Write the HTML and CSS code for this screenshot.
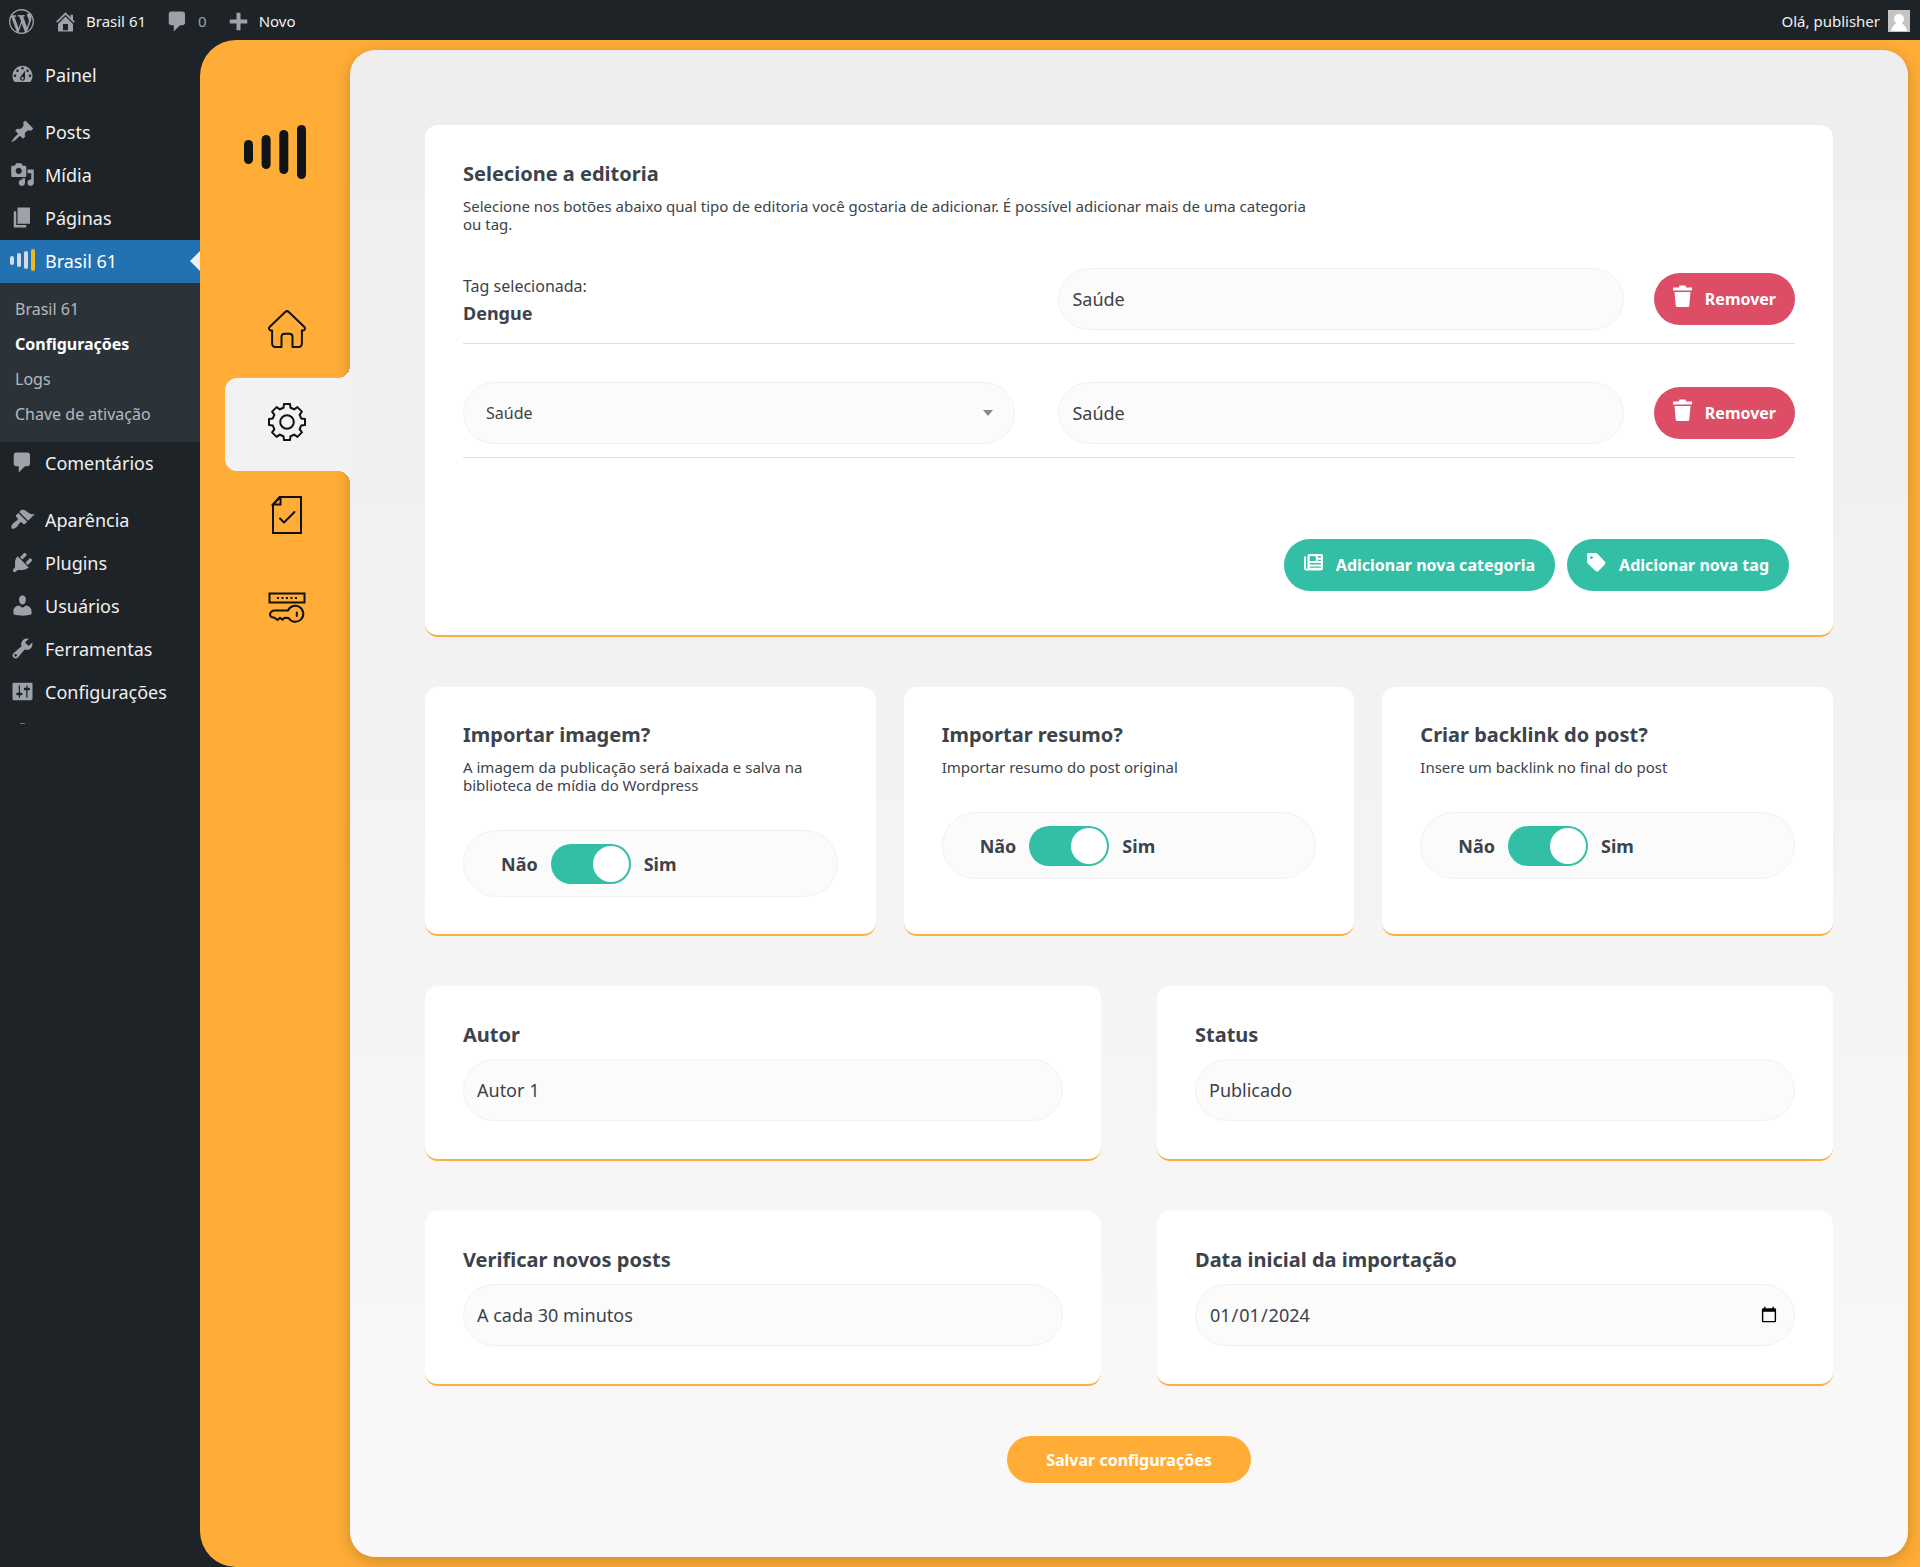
FILE: index.html
```html
<!DOCTYPE html>
<html lang="pt-BR">
<head>
<meta charset="utf-8">
<meta name="viewport" content="width=device-width, initial-scale=1">
<title>Configurações ‹ Brasil 61</title>
<link rel="stylesheet" href="styles.css">
</head>
<body>
<header class="adminbar">
  <a class="bar-item bar-logo" href="#" aria-label="WordPress"><svg class="dashicon" viewBox="0 0 20 20"><path d="M20 10c0-5.51-4.49-10-10-10C4.48 0 0 4.49 0 10c0 5.52 4.48 10 10 10 5.51 0 10-4.48 10-10zM7.78 15.37L4.37 6.22c.55-.02 1.17-.08 1.17-.08.5-.06.44-1.13-.06-1.11 0 0-1.45.11-2.37.11-.18 0-.37 0-.58-.01C4.12 2.69 6.87 1.11 10 1.11c2.33 0 4.45.87 6.05 2.34-.68-.11-1.65.39-1.65 1.58 0 .74.45 1.36.9 2.1.35.61.55 1.36.55 2.46 0 1.49-1.4 5-1.4 5l-3.03-8.37c.54-.02.82-.17.82-.17.5-.05.44-1.25-.06-1.22 0 0-1.44.12-2.38.12-.87 0-2.33-.12-2.33-.12-.5-.03-.56 1.2-.06 1.22l.92.08 1.26 3.41zM17.41 10c.24-.64.74-1.87.43-4.25.7 1.29 1.05 2.71 1.05 4.25 0 3.29-1.73 6.24-4.4 7.78.97-2.59 1.94-5.2 2.92-7.78zM6.1 18.09C3.12 16.65 1.11 13.53 1.11 10c0-1.3.23-2.48.72-3.59C3.25 10.3 4.67 14.2 6.1 18.09zm4.03-6.63l2.58 6.98c-.86.29-1.76.45-2.71.45-.79 0-1.57-.11-2.29-.33.81-2.38 1.62-4.74 2.42-7.1z"/></svg></a>
  <a class="bar-item" href="#"><svg class="dashicon" viewBox="0 0 20 20"><path d="M16 8.5l1.53 1.53-1.06 1.06L10 4.6l-6.47 6.49-1.06-1.06L10 2.5l4 4v-2h2v4zm-6-2.46l6 5.99V18H4v-5.97zM12 17v-5H8v5h4z"/></svg>Brasil 61</a>
  <a class="bar-item bar-muted" href="#"><svg class="dashicon" viewBox="0 0 20 20"><path d="M5 2h9c1.1 0 2 .9 2 2v7c0 1.1-.9 2-2 2h-2l-5 5v-5H5c-1.1 0-2-.9-2-2V4c0-1.1.9-2 2-2z"/></svg>0</a>
  <a class="bar-item" href="#"><svg class="dashicon" viewBox="0 0 20 20"><path d="M17 8.4v3.2h-5.4V17H8.400v-5.400H3V8.400h5.400V3h3.200v5.400z"/></svg>Novo</a>
  <a class="bar-item bar-user" href="#">Olá, publisher<svg class="avatar" viewBox="0 0 22 22"><rect width="22" height="22" fill="#c4c4c4"/><circle cx="11" cy="9" r="5" fill="#fff"/><path d="M3 21c1-5 4-7 5.500-8h5c1.500 1 4.500 3 5.500 8z" fill="#fff"/></svg></a>
</header>

<div class="shell">
  <nav class="sidebar" aria-label="Menu principal">
    <ul class="menu">
      <li><a class="menu-link" href="#"><svg class="dashicon" viewBox="0 0 20 20"><path fill-rule="evenodd" d="M3.76 16h12.48c1.090-1.270 1.760-2.950 1.760-4.760C18 6.690 14.420 3 10 3S2 6.690 2 11.240c0 1.810.670 3.490 1.760 4.760zM10 4c.55 0 1 .45 1 1s-.45 1-1 1-1-.45-1-1 .45-1 1-1zM6 6c.55 0 1 .45 1 1s-.45 1-1 1-1-.45-1-1 .45-1 1-1zm8 0c.55 0 1 .45 1 1s-.45 1-1 1-1-.45-1-1 .45-1 1-1zm-5.370 5.550L12 7v6c0 1.100-.9 2-2 2s-2-.9-2-2c0-.57.24-1.080.63-1.450zM4 10c.55 0 1 .45 1 1s-.45 1-1 1-1-.45-1-1 .45-1 1-1zm12 0c.55 0 1 .45 1 1s-.45 1-1 1-1-.45-1-1 .45-1 1-1zm-5 3c0-.55-.45-1-1-1s-1 .45-1 1 .45 1 1 1 1-.45 1-1z"/></svg>Painel</a></li>
      <li class="menu-break"><a class="menu-link" href="#"><svg class="dashicon" viewBox="0 0 20 20"><path d="M10.440 3.020l1.820-1.820 6.360 6.350-1.830 1.820c-1.050-.68-2.480-.57-3.410.36l-.75.75c-.92.93-1.040 2.350-.35 3.410l-1.830 1.820-2.410-2.410-2.800 2.790c-.42.42-3.380 2.710-3.800 2.290s1.860-3.390 2.280-3.810l2.790-2.790L4.100 9.360l1.830-1.820c1.050.69 2.480.57 3.400-.36l.75-.75c.93-.92 1.050-2.350.36-3.410z"/></svg>Posts</a></li>
      <li><a class="menu-link" href="#"><svg class="dashicon" viewBox="0 0 20 20"><path d="M13 11V4c0-.55-.45-1-1-1h-1.670L9 1H5L3.670 3H2c-.55 0-1 .45-1 1v7c0 .55.45 1 1 1h10c.55 0 1-.45 1-1zM7 4.500c1.380 0 2.500 1.120 2.500 2.500S8.380 9.500 7 9.500 4.500 8.380 4.500 7 5.620 4.500 7 4.500zM14 6h5v10.500c0 1.380-1.120 2.500-2.500 2.500S14 17.880 14 16.500s1.120-2.500 2.500-2.500c.17 0 .34.02.5.05V9h-3V6zm-4 8.050V13h2v3.500c0 1.380-1.120 2.500-2.500 2.500S7 17.880 7 16.500 8.120 14 9.500 14c.17 0 .34.02.5.05z"/></svg>Mídia</a></li>
      <li><a class="menu-link" href="#"><svg class="dashicon" viewBox="0 0 20 20"><path d="M6 15V2h10v13H6zm-1 1h8v2H3V5h2v11z"/></svg>Páginas</a></li>
      <li>
        <a class="menu-link menu-current" href="#"><svg class="dashicon" viewBox="0 0 25 25"><g fill="#d5dbe6"><rect x="0" y="8" width="4" height="9" rx="2"/><rect x="7" y="5" width="4" height="14" rx="2"/><rect x="14" y="3" width="4" height="18" rx="2"/></g><rect x="21" y="1" width="4" height="22" rx="2" fill="#f0b71c"/></svg>Brasil 61</a>
        <ul class="submenu">
          <li><a class="submenu-link" href="#">Brasil 61</a></li>
          <li><a class="submenu-link submenu-current" href="#">Configurações</a></li>
          <li><a class="submenu-link" href="#">Logs</a></li>
          <li><a class="submenu-link" href="#">Chave de ativação</a></li>
        </ul>
      </li>
      <li><a class="menu-link" href="#"><svg class="dashicon" viewBox="0 0 20 20"><path d="M5 2h9c1.100 0 2 .9 2 2v7c0 1.100-.9 2-2 2h-2l-5 5v-5H5c-1.100 0-2-.9-2-2V4c0-1.100.9-2 2-2z"/></svg>Comentários</a></li>
      <li class="menu-break"><a class="menu-link" href="#"><svg class="dashicon" viewBox="0 0 20 20"><path d="M14.480 11.060L7.410 3.990l1.500-1.500c.5-.56 2.300-.47 3.510.32 1.210.8 1.430 1.280 2.910 2.100 1.180.64 2.450 1.260 4.450.85zm-.71.71L6.700 4.700 4.930 6.470c-.39.39-.39 1.020 0 1.410l1.060 1.060c.39.39.39 1.030 0 1.420-.6.6-1.430 1.110-2.210 1.690-.35.26-.7.53-1.010.84C1.430 14.230.4 16.080 1.400 17.070c.99 1 2.840-.03 4.180-1.360.31-.31.58-.66.85-1.020.57-.78 1.080-1.610 1.690-2.210.39-.39 1.020-.39 1.410 0l1.060 1.060c.39.39 1.020.39 1.410 0z"/></svg>Aparência</a></li>
      <li><a class="menu-link" href="#"><svg class="dashicon" viewBox="0 0 20 20"><path d="M13.110 4.360L9.870 7.600 8 5.730l3.240-3.240c.35-.34 1.050-.2 1.560.32.52.51.66 1.210.31 1.550zm-8 1.770l.91-1.120 9.010 9.010-1.190.84c-.71.71-2.630 1.160-3.820 1.160H6.140L4.900 17.260c-.59.59-1.540.59-2.120 0-.59-.58-.59-1.530 0-2.120l1.240-1.240v-3.880c0-1.130.4-3.190 1.090-3.890zm7.260 3.970l3.240-3.240c.34-.35 1.040-.21 1.550.31.52.51.66 1.210.31 1.550l-3.240 3.250z"/></svg>Plugins</a></li>
      <li><a class="menu-link" href="#"><svg class="dashicon" viewBox="0 0 20 20"><path d="M10 9.250c-2.270 0-2.730-3.440-2.730-3.440C7 4.020 7.820 2 9.970 2c2.160 0 2.980 2.020 2.710 3.810 0 0-.41 3.440-2.680 3.440zm0 2.570L12.720 10c2.390 0 4.520 2.330 4.520 4.530v2.490s-3.650 1.130-7.240 1.130c-3.650 0-7.240-1.130-7.240-1.130v-2.490c0-2.250 1.940-4.480 4.470-4.480z"/></svg>Usuários</a></li>
      <li><a class="menu-link" href="#"><svg class="dashicon" viewBox="0 0 20 20"><path d="M16.680 9.770c-1.340 1.340-3.300 1.670-4.950.99l-5.410 6.520c-.99.99-2.590.99-3.580 0s-.99-2.590 0-3.570l6.520-5.420c-.68-1.650-.35-3.610.99-4.950 1.280-1.280 3.120-1.620 4.720-1.060l-2.890 2.890 2.820 2.820 2.860-2.870c.53 1.580.18 3.390-1.080 4.650zM3.810 16.210c.4.39 1.040.39 1.430 0 .4-.4.4-1.040 0-1.430-.39-.4-1.030-.4-1.430 0-.39.39-.39 1.030 0 1.430z"/></svg>Ferramentas</a></li>
      <li><a class="menu-link" href="#"><svg class="dashicon" viewBox="0 0 20 20"><path d="M18 16V4c0-.55-.45-1-1-1H3c-.55 0-1 .45-1 1v12c0 .55.45 1 1 1h13c.55 0 2-.45 2-1zM8 11h1c.55 0 1 .45 1 1s-.45 1-1 1H8v1.500c0 .28-.22.5-.5.5s-.5-.22-.5-.5V13H6c-.55 0-1-.45-1-1s.45-1 1-1h1V5.500c0-.28.22-.5.5-.5s.5.22.5.5V11zm5-2h-1c-.55 0-1-.45-1-1s.45-1 1-1h1V5.500c0-.28.22-.5.5-.5s.5.22.5.5V7h1c.55 0 1 .45 1 1s-.45 1-1 1h-1v5.500c0 .28-.22.5-.5.5s-.5-.22-.5-.5V9z"/></svg>Configurações</a></li>
    </ul>
    <button class="collapse" type="button" aria-label="Recolher menu"></button>
  </nav>

  <div class="plugin">
    <nav class="plugin-nav" aria-label="Brasil 61">
      <a class="brand" href="#" aria-label="Brasil 61"><svg width="62" height="54" viewBox="0 0 62 54" fill="#101417"><rect x="0" y="15" width="9" height="24" rx="4.500"/><rect x="17.600" y="10" width="9" height="34" rx="4.500"/><rect x="35.300" y="5" width="9" height="44" rx="4.500"/><rect x="53" y="0" width="9" height="54" rx="4.500"/></svg></a>
      <a class="tab" href="#" aria-label="Início"><svg width="38" height="38" viewBox="0 0 38 38"><path d="M17.500 1.800c1-.9 2-.9 3 0l15.700 15c1.500 1.600.7 3.700-1.500 3.700h-.8v12.700c0 2.500-1.200 3.800-3.600 3.800h-5.800V27c0-2.200-1-3.200-3.200-3.200h-4.600c-2.200 0-3.200 1-3.200 3.200v10H7.700c-2.400 0-3.600-1.300-3.600-3.800V20.500h-.8c-2.200 0-3-2.100-1.500-3.700z"/></svg></a>
      <a class="tab tab-active" href="#" aria-label="Configurações" aria-current="page"><svg width="38" height="38" viewBox="-19 -19 38 38"><path d="M-3.500-14.200L-3-18H3L3.500-14.200C4.800-13.700 6-13.300 7.200-12.600L10.400-14.900 14.900-10.400 12.600-7.200C13.300-6 13.700-4.800 14.200-3.500L18-3V3L14.200 3.500C13.700 4.800 13.300 6 12.600 7.200L14.900 10.400 10.400 14.900 7.200 12.600C6 13.300 4.800 13.700 3.500 14.200L3 18H-3L-3.500 14.200C-4.800 13.700-6 13.300-7.200 12.600L-10.400 14.900-14.900 10.400-12.600 7.200C-13.300 6-13.700 4.800-14.200 3.500L-18 3V-3L-14.200-3.500C-13.700-4.800-13.300-6-12.600-7.200L-14.900-10.400-10.400-14.900-7.200-12.600C-6-13.300-4.800-13.700-3.500-14.200z"/><circle r="6.800"/></svg></a>
      <a class="tab" href="#" aria-label="Logs"><svg width="38" height="38" viewBox="0 0 38 38"><path class="miter" d="M11.500 1H33v36H5V8.500z"/><path class="miter" d="M12.500 1v7.500H5z"/><path d="M12 22.500l4 4L26.500 16"/></svg></a>
      <a class="tab" href="#" aria-label="Chave de ativação"><svg width="38" height="32" viewBox="0 0 38 32"><path class="miter" d="M1.500 1.500h35v9h-35z"/><path class="dots" d="M9 6h2m2.500 0h2m2.500 0h2m2.500 0h2m2.500 0h2"/><path d="M20 18.500a8 8 0 1 1 .5 7.500l-4-.2-2 2-2.500-2-2.500 2.200-3-2.200C3.500 25.500 2 24 2 22.200s2-3.700 4.500-3.700zM28.800 20.500v3.500"/></svg></a>
    </nav>

    <main class="panel">
      <form class="settings">
        <section class="card">
          <h2 class="card-title">Selecione a editoria</h2>
          <p class="card-text intro">Selecione nos botões abaixo qual tipo de editoria você gostaria de adicionar. É possível adicionar mais de uma categoria ou tag.</p>
          <div class="rule-list">
            <div class="rule">
              <div class="rule-source"><span class="rule-label">Tag selecionada:</span><strong class="rule-name">Dengue</strong></div>
              <select class="field" aria-label="Categoria para a tag Dengue"><option>Saúde</option></select>
              <button class="btn btn-danger" type="button"><svg width="19" height="22" viewBox="0 0 19 22"><path d="M0 2.500h5.800L6.500.5h6l.7 2H19v3H0zM1.500 7h16l-1.200 13.500c-.1.900-.6 1.500-1.500 1.500H4.200c-.9 0-1.400-.6-1.500-1.500z"/></svg>Remover</button>
            </div>
            <div class="rule">
              <div class="rule-source select-wrap"><select class="field field-arrow" aria-label="Editoria"><option>Saúde</option></select></div>
              <select class="field" aria-label="Categoria para a editoria Saúde"><option>Saúde</option></select>
              <button class="btn btn-danger" type="button"><svg width="19" height="22" viewBox="0 0 19 22"><path d="M0 2.500h5.800L6.500.5h6l.7 2H19v3H0zM1.500 7h16l-1.200 13.500c-.1.900-.6 1.500-1.500 1.500H4.200c-.9 0-1.400-.6-1.500-1.500z"/></svg>Remover</button>
            </div>
          </div>
          <div class="actions">
            <button class="btn btn-add" type="button"><svg width="19" height="17" viewBox="0 0 20 18"><path fill-rule="evenodd" d="M5.500 0H18a2 2 0 0 1 2 2v13a2.500 2.500 0 0 1-2.500 2.500H3A2.700 2.700 0 0 1 0 15V3.500C0 2.800.4 2.300 1 2.300s1 .5 1 1.200V15c0 .5.300.8.800.8s.8-.3.800-.8V2A2 2 0 0 1 5.500 0zM6 2.500v5h6.500v-5zM14.500 2.500v1.400H18V2.500zM14.500 6v1.400H18V6zM6 9.600V11h12V9.600zM6 13.200v1.400h12v-1.400z"/></svg>Adicionar nova categoria</button>
            <button class="btn btn-add" type="button"><svg width="19" height="19" viewBox="0 0 20 20"><path fill-rule="evenodd" d="M2 0h7c.8 0 1.400.2 2 .8l7.700 8.200c.9 1 .9 2.200 0 3.100l-6.600 6.800c-1 .9-2.200.9-3.100 0L.8 11C.2 10.400 0 9.800 0 9V2C0 .7.700 0 2 0zM4.700 3.300a1.500 1.500 0 1 0 0 3 1.500 1.500 0 0 0 0-3z"/></svg>Adicionar nova tag</button>
          </div>
        </section>

        <div class="row row-three">
          <section class="card card-toggle">
            <h2 class="card-title">Importar imagem?</h2>
            <p class="card-text">A imagem da publicação será baixada e salva na biblioteca de mídia do Wordpress</p>
            <label class="switch"><span>Não</span><input class="switch-input" type="checkbox" checked aria-label="Importar imagem?"><span>Sim</span></label>
          </section>
          <section class="card card-toggle">
            <h2 class="card-title">Importar resumo?</h2>
            <p class="card-text">Importar resumo do post original</p>
            <label class="switch"><span>Não</span><input class="switch-input" type="checkbox" checked aria-label="Importar resumo?"><span>Sim</span></label>
          </section>
          <section class="card card-toggle">
            <h2 class="card-title">Criar backlink do post?</h2>
            <p class="card-text">Insere um backlink no final do post</p>
            <label class="switch"><span>Não</span><input class="switch-input" type="checkbox" checked aria-label="Criar backlink do post?"><span>Sim</span></label>
          </section>
        </div>

        <div class="row row-two">
          <section class="card card-field">
            <label class="card-title" for="autor">Autor</label>
            <select class="field" id="autor"><option>Autor 1</option></select>
          </section>
          <section class="card card-field">
            <label class="card-title" for="status">Status</label>
            <select class="field" id="status"><option>Publicado</option></select>
          </section>
        </div>

        <div class="row row-two">
          <section class="card card-field">
            <label class="card-title" for="intervalo">Verificar novos posts</label>
            <select class="field" id="intervalo"><option>A cada 30 minutos</option></select>
          </section>
          <section class="card card-field">
            <label class="card-title" for="data">Data inicial da importação</label>
            <input class="field field-date" id="data" type="date" value="2024-01-01">
          </section>
        </div>

        <button class="btn btn-save" type="submit">Salvar configurações</button>
      </form>
    </main>
  </div>
</div>
</body>
</html>
```
FILE: styles.css
```css
* {
  box-sizing: border-box;
}

body {
  display: flex;
  flex-direction: column;
  min-height: 100vh;
  margin: 0;
  background: #1d2327;
  color: #3c434a;
  font-family: "Noto Sans", "Open Sans", sans-serif;
}

a {
  color: inherit;
  text-decoration: none;
}

ul {
  margin: 0;
  padding: 0;
  list-style: none;
}

svg {
  display: block;
  flex: none;
}

button,
input,
select {
  font-family: inherit;
}

/* Admin bar */
.adminbar {
  display: flex;
  align-items: center;
  gap: 19px;
  height: 40px;
  padding: 2px 10px 0 9px;
  color: #f0f0f1;
  font-size: 15px;
  line-height: 38px;
}

.bar-item {
  display: flex;
  align-items: center;
  gap: 8px;
}

.bar-muted {
  color: #9ca2a7;
}

.bar-user {
  margin-left: auto;
}

.dashicon {
  width: 25px;
  height: 25px;
  fill: #9ca2a7;
}

.avatar {
  width: 22px;
  height: 22px;
}

/* Admin menu */
.shell {
  display: flex;
  flex: 1;
}

.sidebar {
  flex: none;
  width: 200px;
  padding-top: 14px;
}

.menu-break {
  margin-top: 14px;
}

.menu-link {
  display: flex;
  align-items: center;
  gap: 10px;
  height: 43px;
  padding: 0 0 2px 10px;
  color: #f0f0f1;
  font-size: 18px;
}

.menu-current {
  position: relative;
  background: #2271b1;
  color: #fff;
}

.menu-current::after {
  content: "";
  position: absolute;
  top: 11px;
  right: 0;
  border: 10px solid transparent;
  border-left: 0;
  border-right-color: #f0f0f1;
}

.submenu {
  padding: 9px 0 10px;
  background: #2c3338;
}

.submenu-link {
  display: block;
  padding-left: 15px;
  color: #b4b9be;
  font-size: 16px;
  line-height: 35px;
}

.submenu-current {
  color: #fff;
  font-weight: 700;
}

.collapse {
  display: block;
  width: 5px;
  height: 1px;
  margin: 9px 0 0 20px;
  padding: 0;
  border: 0;
  background: #6c7277;
}

/* Plugin frame */
.plugin {
  display: flex;
  flex: 1;
  min-width: 0;
  padding: 10px 12px 10px 0;
  border-radius: 36px 0 0 36px;
  background: #ffad36;
}

.plugin-nav {
  position: relative;
  z-index: 1;
  flex: none;
  width: 150px;
  padding: 75px 0 0 25px;
}

.brand {
  display: block;
  width: 62px;
  margin: 0 0 106px 19px;
}

.tab {
  display: flex;
  align-items: center;
  justify-content: center;
  height: 93px;
  padding: 0 1px 5px 0;
}

.tab svg {
  fill: none;
  stroke: #111;
  stroke-width: 2;
  stroke-linecap: round;
  stroke-linejoin: round;
}

.tab .miter {
  stroke-linejoin: miter;
}

.tab .dots {
  stroke-linecap: butt;
}

.tab-active {
  position: relative;
  border-radius: 12px 0 0 12px;
  background: #f2f2f2;
}

.tab-active::before,
.tab-active::after {
  content: "";
  position: absolute;
  right: 0;
  width: 12px;
  height: 12px;
}

.tab-active::before {
  bottom: 100%;
  background: radial-gradient(circle at 0 0, transparent 12px, #f2f2f2 12px);
}

.tab-active::after {
  top: 100%;
  background: radial-gradient(circle at 0 100%, transparent 12px, #f2f2f2 12px);
}

.panel {
  flex: 1;
  min-width: 0;
  padding: 75px 75px 74px;
  border-radius: 25px;
  background: linear-gradient(#eee, #faf8f9);
  box-shadow: 0 4px 16px rgba(0, 0, 0, 0.2);
}

/* Settings */
.settings {
  display: flex;
  flex-direction: column;
  gap: 50px;
}

.card {
  padding: 38px 38px 44px;
  border-bottom: 2px solid #f8b040;
  border-radius: 13px;
  background: #fff;
}

.card-title {
  display: block;
  margin: 0;
  font-size: 20px;
  font-weight: 700;
  line-height: 22px;
}

.card-text {
  margin: 12px 0 0;
  font-size: 15px;
  line-height: 18px;
}

.intro {
  max-width: 860px;
}

.rule-list {
  display: grid;
  gap: 38px;
  margin-top: 35px;
}

.rule {
  display: grid;
  grid-template-columns: 1fr 1fr auto;
  align-items: center;
  gap: 30px;
  padding-bottom: 13px;
  border-bottom: 1px solid #e0e0e2;
}

.rule-source {
  margin-right: 13px;
}

.rule-label,
.rule-name {
  display: block;
}

.rule-label {
  padding-top: 2px;
  font-size: 16px;
  line-height: 26px;
}

.rule-name {
  font-size: 18px;
  font-weight: 700;
  line-height: 28px;
}

.field {
  display: block;
  width: 100%;
  height: 62px;
  padding: 0 13px;
  appearance: none;
  border: 1px solid #f2f2f3;
  border-radius: 31px;
  background: #fbfbfb;
  color: #3c434a;
  font-size: 18px;
}

.select-wrap {
  position: relative;
}

.select-wrap::after {
  content: "";
  position: absolute;
  top: 28px;
  right: 22px;
  border: 5px solid transparent;
  border-top: 6px solid #888;
  border-bottom: 0;
}

.field-arrow {
  padding-left: 22px;
  font-size: 16px;
}

.field-date {
  padding-right: 14px;
}

.btn {
  display: inline-flex;
  align-items: center;
  justify-content: center;
  gap: 13px;
  height: 52px;
  padding: 0 19px;
  border: 0;
  border-radius: 26px;
  color: #fff;
  font-size: 16px;
  font-weight: 700;
}

.btn svg {
  margin-bottom: 6px;
  fill: #fff;
}

.btn-danger {
  background: #dd4d65;
}

.btn-add {
  padding: 0 20px;
  background: #33bfa6;
}

.btn-save {
  align-self: center;
  height: 47px;
  padding: 0 39px;
  background: #ffad36;
}

.actions {
  display: flex;
  justify-content: flex-end;
  gap: 12px;
  margin-top: 81px;
  padding-right: 6px;
}

.row {
  display: grid;
}

.row-three {
  grid-template-columns: repeat(3, 1fr);
  gap: 28px;
}

.row-two {
  grid-template-columns: repeat(2, 1fr);
  gap: 56px;
}

.card-toggle {
  padding-top: 37px;
  padding-bottom: 37px;
}

.card-field .field {
  margin-top: 13px;
}

.card-field {
  padding-bottom: 38px;
}

.switch {
  display: flex;
  align-items: center;
  gap: 13px;
  height: 67px;
  margin-top: 36px;
  padding-left: 37px;
  border: 1px solid #f2f2f3;
  border-radius: 34px;
  background: #fbfbfb;
  font-size: 18px;
  font-weight: 700;
}

.switch-input {
  display: flex;
  justify-content: flex-end;
  width: 80px;
  height: 40px;
  margin: 0;
  padding: 2px;
  appearance: none;
  border-radius: 20px;
  background: #33bfa6;
}

.switch-input::before {
  content: "";
  width: 36px;
  height: 36px;
  border-radius: 50%;
  background: #fff;
}

.switch-input:not(:checked) {
  justify-content: flex-start;
  background: #c3c4c7;
}
```
